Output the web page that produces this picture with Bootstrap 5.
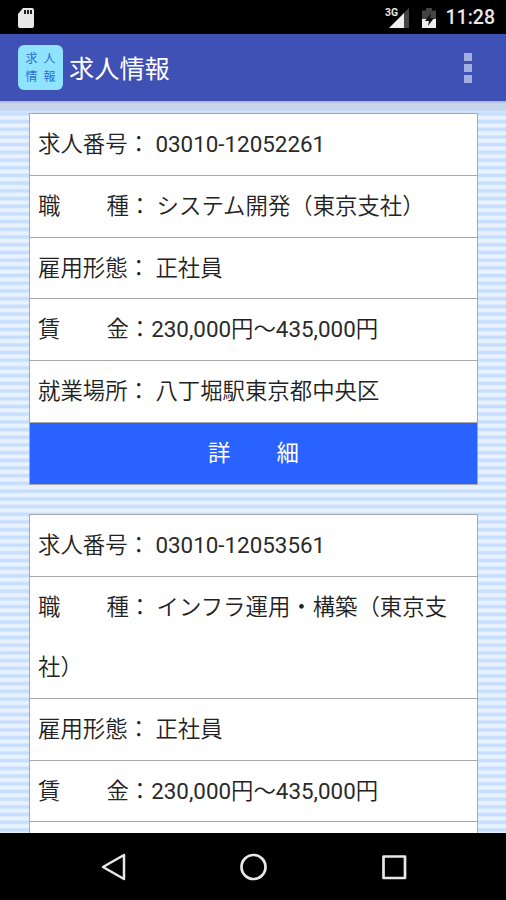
<!DOCTYPE html>
<html lang="ja">
<head>
<meta charset="utf-8">
<meta name="viewport" content="width=device-width, initial-scale=1">
<title>求人情報</title>
<link href="https://cdn.jsdelivr.net/npm/bootstrap@5.3.0/dist/css/bootstrap.min.css" rel="stylesheet">
<style>
body{font-family:Roboto,"Noto Sans CJK JP",sans-serif;height:900px;color:#222}
.status-bar{height:34px;padding:2px 11px 0 17px;font-size:19.500px;font-weight:500;color:#e8e8e8}
.app-bar{height:67px;background:#3f51b5;padding:0 34px 0 18px}
.app-logo{width:45px;height:45px;border-radius:6px;background:#8fe3ff;color:#2a6fd0;font-size:12px;line-height:17.5px;grid-template-columns:18px 18px;font-weight:400;padding-top:2px}
.app-title{font-size:25.2px;line-height:30px;padding-top:4px;margin-left:6px}
.menu-stack{gap:3px}
.menu-dot{width:8px;height:8px;background:#a3aee0}
.page-area{background:repeating-linear-gradient(#e8f2fe 0,#e8f2fe 2.500px,#c8deff 4.2px,#c8deff 6.2px,#e8f2fe 7.7px)}
.bar-shadow{height:12px;background:linear-gradient(#a9b2d6 0,#cbd5e9 3px,#c3d6ef 9px,rgba(210,226,250,0) 12px)}
.job{margin:0 28px 29px 29px;border:1px solid #a8a8a8;font-size:22.4px;line-height:60.6px;font-weight:350}
.job-row{border-bottom:1px solid #a8a8a8;padding:0 8px;height:61.8px}
.job-row.two-line{height:122.3px}
.job-row:last-child{border-bottom:0}
.job-row.detail{background:#2962ff;font-weight:400;height:60.8px}
.wide-gap{letter-spacing:.6px}
.num{font-weight:400;color:#2a2a2a}
.nav-bar{height:67px;padding:0 99px}
</style>
</head>
<body class="d-flex flex-column overflow-hidden bg-black">
<div class="status-bar d-flex align-items-center justify-content-between bg-black flex-shrink-0">
  <svg width="18" height="22" viewBox="0 0 18 22"><path d="M6 1H15Q17 1 17 3V19Q17 21 15 21H3Q1 21 1 19V7Z" fill="#e8e8e8"/><path d="M7 3h2v4H7zM10 3h2v4h-2zM13 3h2v4h-2z" fill="#222"/></svg>
  <div class="d-flex align-items-center">
    <svg width="61" height="24" viewBox="0 0 61 24"><text x="0" y="10" font-size="11" font-weight="700" fill="#e8e8e8" textLength="13" lengthAdjust="spacingAndGlyphs">3G</text><path d="M19 7 24 2V22H19Z" fill="#444"/><path d="M4 22 19 7V22Z" fill="#eee"/><path d="M37 4.500H41V2H47V4.500H51V22H37Z" fill="#444"/><path d="M37 13H51V22H37Z" fill="#eee"/><path d="M46 7 40 15H44L43 20 49 12H45Z" fill="#111"/></svg>
    <span>11:28</span>
  </div>
</div>
<header class="app-bar d-flex align-items-center flex-shrink-0 text-white">
  <div class="app-logo d-grid justify-content-center align-content-center text-center"><span>求</span><span>人</span><span>情</span><span>報</span></div>
  <div class="app-title">求人情報</div>
  <div class="menu-stack ms-auto d-flex flex-column"><span class="menu-dot"></span><span class="menu-dot"></span><span class="menu-dot"></span></div>
</header>
<main class="page-area flex-grow-1 overflow-hidden">
  <div class="bar-shadow"></div>
  <section class="job bg-white">
    <div class="job-row">求人番号： <span class="num">03010-12052261</span></div>
    <div class="job-row">職<span class="wide-gap">　　</span>種： システム開発（東京支社）</div>
    <div class="job-row">雇用形態： 正社員</div>
    <div class="job-row">賃<span class="wide-gap">　　</span>金：<span class="num">230,000</span>円～<span class="num">435,000</span>円</div>
    <div class="job-row">就業場所： 八丁堀駅東京都中央区</div>
    <div class="job-row detail text-white text-center">詳<span class="wide-gap">　　</span>細</div>
  </section>
  <section class="job bg-white">
    <div class="job-row">求人番号： <span class="num">03010-12053561</span></div>
    <div class="job-row two-line">職<span class="wide-gap">　　</span>種： インフラ運用・構築（東京支社）</div>
    <div class="job-row">雇用形態： 正社員</div>
    <div class="job-row">賃<span class="wide-gap">　　</span>金：<span class="num">230,000</span>円～<span class="num">435,000</span>円</div>
    <div class="job-row"></div>
  </section>
</main>
<nav class="nav-bar d-flex align-items-center justify-content-between bg-black flex-shrink-0">
  <svg width="28" height="30" viewBox="0 0 28 30" fill="none" stroke="#e8e8e8" stroke-width="2.500" stroke-linejoin="round"><path d="M25 3V27L4 15Z"/></svg>
  <svg width="30" height="30" viewBox="0 0 30 30" fill="none" stroke="#e8e8e8" stroke-width="2.700"><circle cx="15.500" cy="15" r="12"/></svg>
  <svg width="28" height="30" viewBox="0 0 28 30" fill="none" stroke="#e8e8e8" stroke-width="2.700" stroke-linejoin="round"><path d="M4.500 4.500H26V26H4.500Z"/></svg>
</nav>
<script src="https://cdn.jsdelivr.net/npm/bootstrap@5.3.0/dist/js/bootstrap.bundle.min.js"></script>
</body>
</html>
